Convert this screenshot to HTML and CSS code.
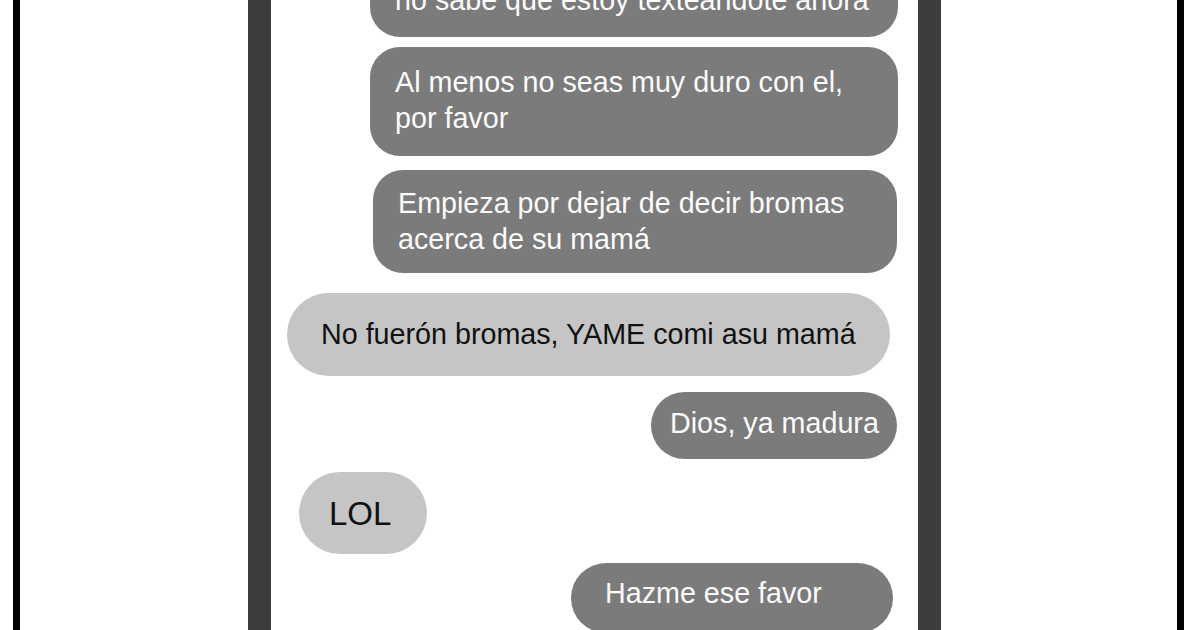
FILE: index.html
```html
<!DOCTYPE html>
<html lang="es">
<head>
<meta charset="utf-8">
<title>Chat</title>
<link rel="stylesheet" href="styles.css">
</head>
<body>
<div class="frame">
  <div class="phone">
    <div class="chat">
      <div class="bubble sent b1">no sabe que estoy texteandote ahora</div>
      <div class="bubble sent b2">Al menos no seas muy duro con el,<br>por favor</div>
      <div class="bubble sent b3">Empieza por dejar de decir bromas<br>acerca de su mamá</div>
      <div class="bubble recv b4">No fuerón bromas, YAME comi asu mamá</div>
      <div class="bubble sent b5">Dios, ya madura</div>
      <div class="bubble recv b6">LOL</div>
      <div class="bubble sent b7">Hazme ese favor</div>
    </div>
  </div>
</div>
</body>
</html>
```

FILE: styles.css
```css
* { box-sizing: border-box; }
html, body { margin: 0; padding: 0; background: #fff; }
body {
  width: 1200px;
  height: 630px;
  overflow: hidden;
  font-family: "Liberation Sans", Arial, sans-serif;
}
.frame {
  margin-left: 13px;
  width: 1171px;
  height: 630px;
  border-left: 7px solid #000;
  border-right: 7px solid #000;
  padding-left: 228px;
}
.phone {
  width: 693px;
  height: 630px;
  border-left: 23px solid #3c3c3c;
  border-right: 23px solid #3c3c3c;
  background: #fff;
  overflow: hidden;
}
.chat {
  display: flex;
  flex-direction: column;
}
.bubble {
  font-size: 28.7px;
  line-height: 36px;
  white-space: nowrap;
}
.sent {
  align-self: flex-end;
  background: #7b7b7b;
  color: #fbfbfb;
}
.recv {
  align-self: flex-start;
  background: #c5c5c5;
  color: #111;
}
.b1 {
  margin-top: -31px;
  margin-right: 20px;
  width: 528px;
  padding: 13px 0 19px 25px;
  border-radius: 30px;
}
.b2 {
  margin-top: 10px;
  margin-right: 20px;
  width: 528px;
  padding: 17px 0 20px 25px;
  border-radius: 30px;
}
.b3 {
  margin-top: 14px;
  margin-right: 21px;
  width: 524px;
  padding: 15px 0 16px 25px;
  border-radius: 30px;
}
.b4 {
  margin-top: 20px;
  margin-left: 16px;
  width: 603px;
  padding: 23px 0 24px 34px;
  border-radius: 42px;
}
.b5 {
  margin-top: 16px;
  margin-right: 21px;
  width: 246px;
  padding: 13px 0 18px 19px;
  border-radius: 34px;
}
.b6 {
  margin-top: 13px;
  margin-left: 28px;
  width: 128px;
  padding: 24px 0 22px 30px;
  font-size: 33px;
  border-radius: 41px;
}
.b7 {
  margin-top: 9px;
  margin-right: 25px;
  width: 322px;
  padding: 12px 0 22px 34px;
  border-radius: 35px;
}
```
